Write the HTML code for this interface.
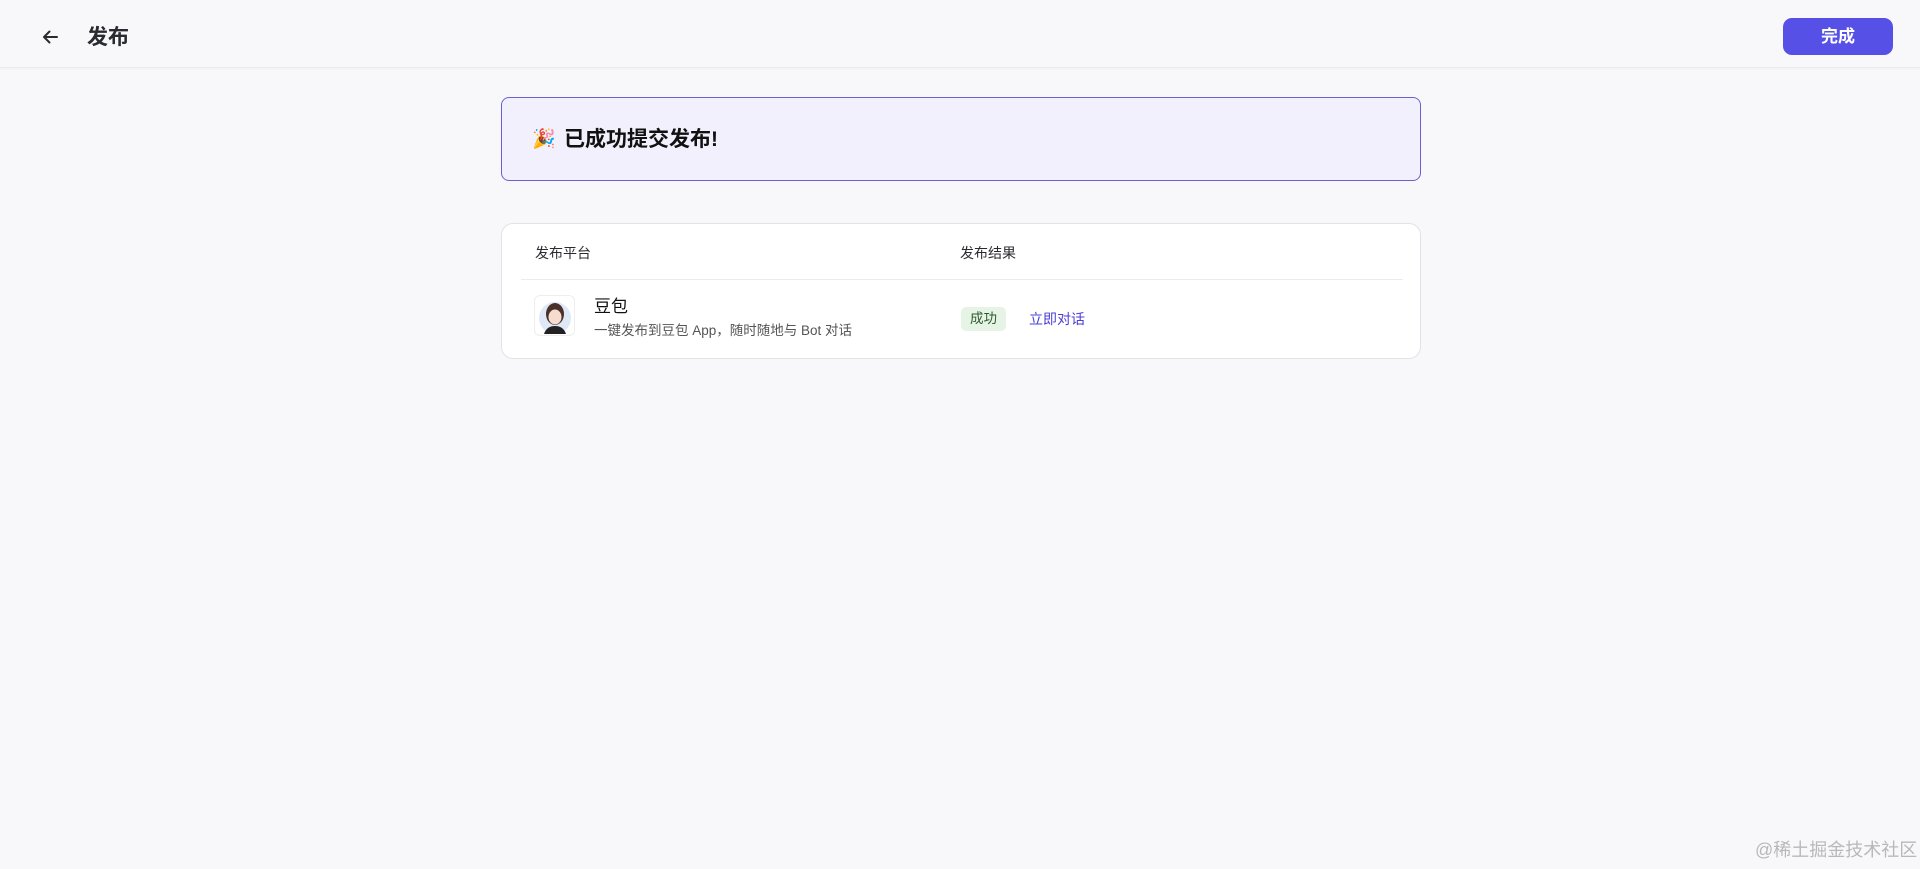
<!DOCTYPE html>
<html><head><meta charset="utf-8"><style>
*{margin:0;padding:0;box-sizing:border-box}
body{width:1920px;height:869px;background:#f8f8fa;font-family:"Liberation Sans","Noto Sans CJK SC",sans-serif;position:relative;overflow:hidden;color:#1c1d23}
.hdr{position:absolute;left:0;top:0;width:1920px;height:68px;border-bottom:1px solid #ebebee;box-shadow:0 1px 2px rgba(0,0,0,0.03)}
.title{position:absolute;left:87px;top:24px;font-size:21px;font-weight:bold;color:#2a2b30;line-height:28px}
.btn{position:absolute;left:1783px;top:18px;width:110px;height:37px;background:#5650e6;border-radius:9px;color:#fff;font-size:17px;font-weight:bold;text-align:center;line-height:37px}
.banner{position:absolute;left:501px;top:97px;width:920px;height:84px;border:1px solid #6a60d2;border-radius:8px;background:#f1f0fc}
.banner .t{position:absolute;left:62px;top:27px;font-size:21px;font-weight:bold;color:#111;line-height:30px}
.banner .e{position:absolute;left:30px;top:30px;font-size:19px;line-height:24px}
.card{position:absolute;left:501px;top:223px;width:920px;height:136px;background:#fff;border:1px solid #e2e2e6;border-radius:12px}
.th{position:absolute;top:19px;font-size:14px;color:#2a2b30;line-height:20px}
.div{position:absolute;left:19px;top:55px;width:882px;height:1px;background:#ececf0}
.av{position:absolute;left:32px;top:71px;width:41px;height:41px;border:1px solid #eee;border-radius:6px;overflow:hidden;background:#fff}
.name{position:absolute;left:92px;top:71px;font-size:17px;color:#111;line-height:24px}
.desc{position:absolute;left:92px;top:97px;font-size:13.5px;color:#555;line-height:20px}
.tag{position:absolute;left:459px;top:83px;width:45px;height:24px;background:#e6f4e6;border-radius:5px;color:#2f5a2f;font-size:13.5px;text-align:center;line-height:24px}
.link{position:absolute;left:527px;top:83px;font-size:14px;color:#4a3fd6;line-height:24px}
.wm{position:absolute;left:1755px;top:838px;font-size:18px;color:#b8b8bc;line-height:24px}
</style></head><body>
<div class="hdr">
<svg style="position:absolute;left:40px;top:27px" width="20" height="20" viewBox="0 0 20 20"><path d="M17 10H4M9.5 4.5L4 10l5.5 5.5" stroke="#2a2b30" stroke-width="2" fill="none" stroke-linecap="round" stroke-linejoin="round"/></svg>
<div class="title">发布</div>
<div class="btn">完成</div>
</div>
<div class="banner"><div class="e">🎉</div><div class="t">已成功提交发布!</div></div>
<div class="card">
<div class="th" style="left:33px">发布平台</div>
<div class="th" style="left:458px">发布结果</div>
<div class="div"></div>
<div class="av"><svg width="41" height="41" viewBox="0 0 41 41"><circle cx="20" cy="22" r="16" fill="#dfe8f6"/><ellipse cx="20" cy="18" rx="9" ry="11" fill="#4a3028"/><ellipse cx="20" cy="21" rx="6.5" ry="7.5" fill="#f6dccf"/><path d="M9 38c2-6 6-8 11-8s9 2 11 8z" fill="#222"/></svg></div>
<div class="name">豆包</div>
<div class="desc">一键发布到豆包 App，随时随地与 Bot 对话</div>
<div class="tag">成功</div>
<div class="link">立即对话</div>
</div>
<div class="wm">@稀土掘金技术社区</div>
</body></html>
